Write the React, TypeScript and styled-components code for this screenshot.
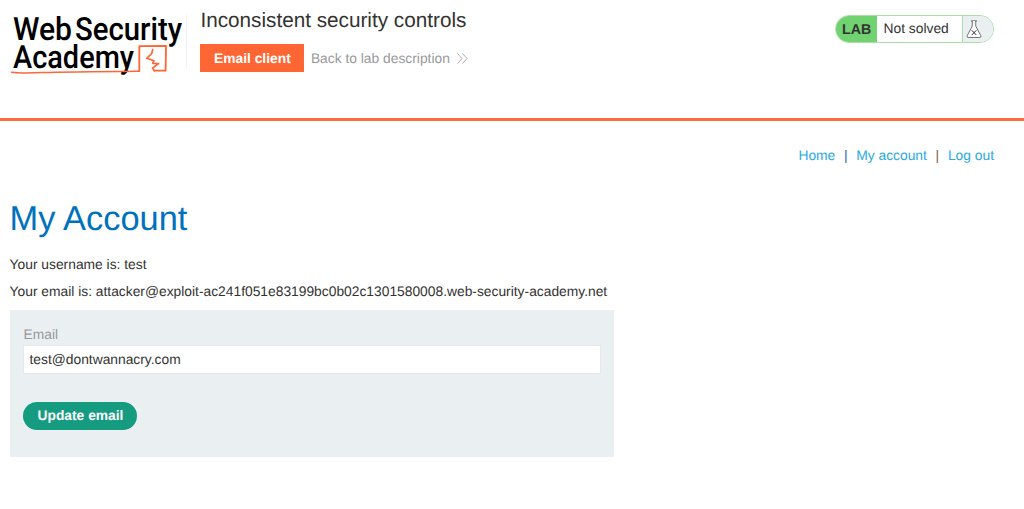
import React from 'react';
import styled, { createGlobalStyle } from 'styled-components';

const GlobalStyle = createGlobalStyle`
  * { box-sizing: border-box; }
  body {
    margin: 0;
    background: #fff;
    color: #333332;
    font: 13.82px/17px "Liberation Sans", Arial, sans-serif;
    text-rendering: geometricPrecision;
  }
`;

const Header = styled.header`
  display: flex;
  align-items: flex-start;
  height: 121px;
  padding-right: 30px;
  border-bottom: 3px solid #ff6c3b;
`;

const LogoLink = styled.a`
  display: block;
  width: 187px;
  height: 53px;
  margin-top: 15px;
  border-right: 1px solid #f0f1f2;
`;

const LogoSvg = styled.svg`
  display: block;
  margin-top: -15px;
  overflow: visible;
`;

const TitleBlock = styled.div`
  flex: 1;
  padding: 8px 0 0 13.4px;
`;

const Title = styled.h2`
  margin: 0 0 11.4px;
  font-size: 20.72px;
  font-weight: 400;
  line-height: 25px;
`;

const Actions = styled.div`
  display: flex;
  align-items: center;
`;

const EmailClient = styled.a`
  width: 104px;
  height: 28px;
  margin-right: 6.5px;
  background: #ff6633;
  color: #fff;
  font-weight: 700;
  line-height: 29px;
  text-align: center;
`;

const BackLink = styled.a`
  display: flex;
  align-items: center;
  gap: 7.5px;
  color: #999;
`;

const Status = styled.div`
  display: flex;
  width: 159px;
  height: 28px;
  margin-top: 15px;
  overflow: hidden;
  border: 1px solid #a9e0a5;
  border-radius: 14px;
  line-height: 25px;
`;

const LabTag = styled.span`
  width: 41px;
  padding-left: 6px;
  background: #70d270;
  font-size: 14.2px;
  font-weight: 700;
  line-height: 28px;
`;

const StatusText = styled.span`
  width: 86px;
  padding-left: 6.5px;
  border-right: 1px solid #a9e0a5;
`;

const FlaskCell = styled.span`
  flex: 1;
  padding: 4px 0 0 3.4px;
  background: #eaeff2;
  svg { display: block; }
`;

const Nav = styled.nav`
  display: flex;
  justify-content: flex-end;
  padding: 26px 30px 0 0;
`;

const NavLink = styled.a`
  color: #29aae3;
`;

const Divider = styled.span<{ $color: string }>`
  width: 21px;
  color: ${(p) => p.$color};
  text-align: center;
`;

const Main = styled.main`
  padding: 35px 0 0 9.6px;
`;

const Heading = styled.h1`
  margin: 0 0 16px;
  color: #0071bc;
  font-size: 34.4px;
  font-weight: 400;
  line-height: 41px;
`;

const Line = styled.p`
  margin: 0 0 10px;
`;

const Form = styled.form`
  width: 604px;
  height: 147px;
  margin-left: 0.4px;
  padding: 16px 13px 0 13.5px;
  background: #eaeff2;
`;

const Label = styled.label`
  display: block;
  color: #999;
`;

const Input = styled.input`
  display: block;
  width: 577.5px;
  height: 29px;
  margin: 2px 0 27.5px;
  padding: 0 5px 2px;
  border: 1px solid #e4e8ea;
  border-radius: 0;
  outline: none;
  background: #fff;
  color: #333332;
  font: inherit;
  text-rendering: inherit;
`;

const SubmitButton = styled.button`
  display: block;
  width: 114px;
  height: 28px;
  padding: 0 0 1px;
  border: 0;
  border-radius: 14px;
  background: #159b80;
  color: #fff;
  font: inherit;
  font-weight: 700;
  text-rendering: inherit;
`;

function Logo() {
  return (
    <LogoSvg width="186" height="80" viewBox="0 0 186 80">
      <g fill="#000" fontFamily="Roboto, sans-serif" fontWeight="500" fontSize="32">
        <text x="13" y="39.5" textLength="59" lengthAdjust="spacingAndGlyphs">Web</text>
        <text x="75" y="39.5" textLength="107" lengthAdjust="spacingAndGlyphs">Security</text>
        <text x="13" y="67.5" textLength="121" lengthAdjust="spacingAndGlyphs">Academy</text>
      </g>
      <g fill="none" stroke="#ff6633" strokeLinejoin="round" strokeLinecap="round">
        <path d="M11.5 72.2 Q20 73.4 42 72.6 T139 71.2" strokeWidth="1.5" />
        <path d="M139.3 71.2 L139.3 46.2 L166 45.8 L165.6 70.5 L154.5 70.7" strokeWidth="1.8" />
        <path d="M152.7 49.5 L151.7 53.5 L146.7 58.3 L154 60.7 L152.7 63.3 L158.5 63.5 L152.6 68.2 L154.3 70.7" strokeWidth="1.7" />
      </g>
    </LogoSvg>
  );
}

function DoubleChevron() {
  return (
    <svg width="11" height="11" viewBox="0 0 11 11" fill="none" stroke="#999" strokeWidth="0.8">
      <path d="M.5 .5 L5 5.5 L.5 10.5 M5.5 .5 L10 5.5 L5.5 10.5" />
    </svg>
  );
}

function Flask() {
  return (
    <svg width="16" height="19" viewBox="0 0 16 19" fill="none" stroke="#555" strokeWidth="0.8">
      <path d="M5 1 H11" strokeWidth="1" />
      <path d="M6.3 1 V6 L1.2 15.7 Q.6 17.5 2.2 17.5 H13.8 Q15.4 17.5 14.8 15.7 L9.7 6 V1" fill="#fff" />
      <path d="M5.8 10.3 L10.3 15 M10.3 10.3 L5.8 15" stroke="#333" strokeWidth="1" />
    </svg>
  );
}

export default function App() {
  return (
    <>
      <GlobalStyle />
      <Header>
        <LogoLink><Logo /></LogoLink>
        <TitleBlock>
          <Title>Inconsistent security controls</Title>
          <Actions>
            <EmailClient>Email client</EmailClient>
            <BackLink>Back to lab description <DoubleChevron /></BackLink>
          </Actions>
        </TitleBlock>
        <Status>
          <LabTag>LAB</LabTag>
          <StatusText>Not solved</StatusText>
          <FlaskCell><Flask /></FlaskCell>
        </Status>
      </Header>
      <Nav>
        <NavLink>Home</NavLink>
        <Divider $color="#2463b5">|</Divider>
        <NavLink>My account</NavLink>
        <Divider $color="#80604a">|</Divider>
        <NavLink>Log out</NavLink>
      </Nav>
      <Main>
        <Heading>My Account</Heading>
        <Line>Your username is: test</Line>
        <Line>Your email is: attacker@exploit-ac241f051e83199bc0b02c1301580008.web-security-academy.net</Line>
        <Form>
          <Label htmlFor="email">Email</Label>
          <Input id="email" type="email" defaultValue="test@dontwannacry.com" />
          <SubmitButton type="button">Update email</SubmitButton>
        </Form>
      </Main>
    </>
  );
}
